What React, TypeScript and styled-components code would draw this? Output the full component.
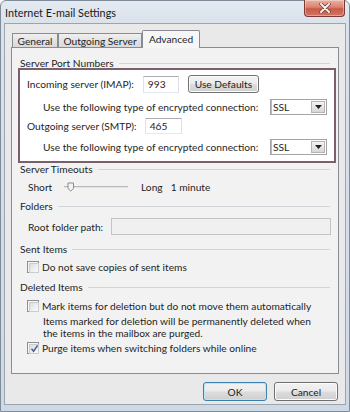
import React from "react";
import styled, { createGlobalStyle, css } from "styled-components";

const FONT = `Lato, "Open Sans", "Liberation Sans", sans-serif`;

const Global = createGlobalStyle`
  html, body { margin: 0; padding: 0; background: #ffffff; }
  body { font-family: ${FONT}; font-size: 10.2px; color: #1e1e1e; }
  * { box-sizing: border-box; }
`;

const Window = styled.div`
  position: relative;
  width: 350px;
  height: 412px;
  display: flex;
  flex-direction: column;
  padding: 0 3px 6px 3px;
  border: 1px solid #7f8b99;
  border-radius: 6px 6px 0 0;
  background: linear-gradient(180deg, #e4eaf1 0px, #dae2eb 22px, #cfd9e4 100%);
`;

const TitleBar = styled.div`
  height: 22px;
  display: flex;
  align-items: center;
  padding-left: 1px;
`;

const Title = styled.span`
  font-size: 10.8px;
  color: #1a1a1a;
  margin-top: 1px;
`;

const CloseButton = styled.div`
  margin-left: auto;
  margin-right: 1px;
  align-self: flex-start;
  margin-top: -1px;
  width: 41px;
  height: 17px;
  border: 1px solid #7a3a32;
  border-top: none;
  border-radius: 0 0 4px 4px;
  background: linear-gradient(180deg, #eab0a2 0%, #dc8270 45%, #c85a47 55%, #d07562 100%);
  box-shadow: inset 0 0 0 1px rgba(255, 255, 255, 0.35);
  display: flex;
  align-items: center;
  justify-content: center;
`;

const Client = styled.div`
  flex: 1;
  display: flex;
  flex-direction: column;
  background: #e9e9e9;
  border: 1px solid #9aa5b2;
  padding: 6px 6px 3px 6px;
`;

const TabBar = styled.div`
  position: relative;
  z-index: 1;
  display: flex;
  align-items: flex-end;
  height: 18px;
  margin-bottom: -1px;
  padding-left: 1px;
`;

const Tab = styled.div<{ $active?: boolean; $w: number }>`
  width: ${(p) => p.$w}px;
  border: 1px solid #898c95;
  border-bottom: none;
  display: flex;
  justify-content: center;
  ${(p) =>
    p.$active
      ? css`
          height: 18px;
          padding-top: 2px;
          background: #f6f6f6;
          border-radius: 2px 2px 0 0;
        `
      : css`
          height: 14px;
          margin-bottom: 1px;
          padding-top: 1px;
          background: linear-gradient(180deg, #f0f0f0 0%, #e3e3e3 50%, #d9d9d9 100%);
        `}
`;

const Panel = styled.div`
  height: 327px;
  flex: none;
  border: 1px solid #898c95;
  background: #f2f2f2;
  padding: 8px 8px 0 8px;
  display: flex;
  flex-direction: column;
`;

const GroupHeader = styled.div<{ $mt?: number }>`
  display: flex;
  align-items: center;
  height: 14px;
  line-height: 14px;
  margin-top: ${(p) => p.$mt ?? 0}px;
  color: #1e1e1e;
  &::after {
    content: "";
    flex: 1;
    height: 1px;
    margin-left: 5px;
    background: #d2d6da;
  }
`;

const HighlightBox = styled.div`
  margin: -2px -6px 0 -2px;
  border: 2px solid #7b5f6d;
  background: #ffffff;
  padding: 5px 7px 6px 7px;
  display: flex;
  flex-direction: column;
`;

const Row = styled.div<{ $mt?: number; $h?: number; $indent?: number }>`
  display: flex;
  align-items: center;
  height: ${(p) => p.$h ?? 16}px;
  margin-top: ${(p) => p.$mt ?? 0}px;
  padding-left: ${(p) => p.$indent ?? 0}px;
  white-space: nowrap;
`;

const TextBox = styled.div<{ $w?: number; $h?: number; $ml?: number; $disabled?: boolean; $grow?: boolean }>`
  ${(p) => (p.$grow ? "flex: 1;" : `width: ${p.$w}px;`)}
  height: ${(p) => p.$h ?? 16}px;
  margin-left: ${(p) => p.$ml ?? 8}px;
  border: 1px solid;
  display: flex;
  align-items: center;
  padding-left: 4px;
  ${(p) =>
    p.$disabled
      ? css`
          background: #f0f0f0;
          border-color: #c4c4c4;
          margin-right: -1px;
        `
      : css`
          background: #ffffff;
          border-color: #abadb3 #dbdfe6 #e3e9ef #e2e3ea;
        `}
`;

const PushButton = styled.div<{ $w: number; $h: number; $ml?: number; $default?: boolean }>`
  width: ${(p) => p.$w}px;
  height: ${(p) => p.$h}px;
  margin-left: ${(p) => p.$ml ?? 0}px;
  border: 1px solid ${(p) => (p.$default ? "#3c7fb1" : "#707070")};
  border-radius: 3px;
  background: linear-gradient(180deg, #f2f2f2 0%, #ebebeb 48%, #dddddd 52%, #cfcfcf 100%);
  box-shadow: inset 0 0 0 1px ${(p) => (p.$default ? "#bfe3f7" : "#fcfcfc")};
  display: flex;
  align-items: center;
  justify-content: center;
  color: #1e1e1e;
`;

const Select = styled.div`
  margin-left: auto;
  width: 57px;
  height: 16px;
  border: 1px solid #a3a3a3;
  background: #ffffff;
  display: flex;
  align-items: stretch;
`;

const SelectValue = styled.div`
  flex: 1;
  display: flex;
  align-items: center;
  padding-left: 2px;
  box-shadow: inset 1px 0 0 #9cc1e6;
`;

const DropButton = styled.div`
  width: 14px;
  margin: 1px;
  border: 1px solid #b5b5b5;
  background: linear-gradient(180deg, #f4f4f4 0%, #e6e6e6 50%, #d6d6d6 100%);
  display: flex;
  align-items: center;
  justify-content: center;
`;

const Short = styled.span`
  width: 36px;
`;

const Slider = styled.div`
  position: relative;
  width: 64px;
  height: 16px;
  display: flex;
  align-items: center;
`;

const Track = styled.div`
  width: 100%;
  height: 2px;
  border-top: 1px solid #b9b9b9;
  border-bottom: 1px solid #e4e4e4;
  background: #d8d8d8;
`;

const Thumb = styled.svg`
  position: absolute;
  left: 3px;
  top: 3px;
`;

const Spaced = styled.span<{ $ml: number }>`
  margin-left: ${(p) => p.$ml}px;
`;

const CheckBox = styled.div<{ $checked?: boolean }>`
  width: 12px;
  height: 12px;
  border: 1px solid #8f8f8f;
  background: #f7f7f7;
  padding: 1px;
  position: relative;
  &::before {
    content: "";
    display: block;
    width: 100%;
    height: 100%;
    border: 1px solid #c9cdd2;
    background: linear-gradient(135deg, #d9dce1 0%, #eef0f2 60%, #fbfbfb 100%);
  }
`;

const CheckMark = styled.svg`
  position: absolute;
  left: 1px;
  top: 0px;
`;

const CheckLabel = styled.span`
  margin-left: 3px;
`;

const Note = styled.div`
  margin-top: 2px;
  padding-left: 23px;
  line-height: 11.5px;
`;

const Footer = styled.div`
  display: flex;
  justify-content: flex-end;
  gap: 7px;
  margin-top: 8px;
  padding-right: 1px;
`;

const Check = ({ checked }: { checked?: boolean }) => (
  <CheckBox $checked={checked}>
    {checked && (
      <CheckMark width="11" height="11" viewBox="0 0 11 11">
        <path d="M2.5 5.8 L4.6 8.2 L8.6 2.4" fill="none" stroke="#4a5d8a" strokeWidth="1.5" />
      </CheckMark>
    )}
  </CheckBox>
);

const Combo = ({ value }: { value: string }) => (
  <Select>
    <SelectValue>{value}</SelectValue>
    <DropButton>
      <svg width="7" height="4" viewBox="0 0 7 4">
        <path d="M0 0 H7 L3.5 4 Z" fill="#222" />
      </svg>
    </DropButton>
  </Select>
);

export default function App() {
  return (
    <>
      <Global />
      <Window>
        <TitleBar>
          <Title>Internet E-mail Settings</Title>
          <CloseButton>
            <svg width="12" height="10" viewBox="0 0 12 10">
              <path d="M2 1 L10 9 M10 1 L2 9" stroke="#6a3a34" strokeWidth="3.4" strokeLinecap="round" />
              <path d="M2 1 L10 9 M10 1 L2 9" stroke="#f4f0ee" strokeWidth="2" strokeLinecap="round" />
            </svg>
          </CloseButton>
        </TitleBar>
        <Client>
          <TabBar>
            <Tab $w={46}>General</Tab>
            <Tab $w={84}>Outgoing Server</Tab>
            <Tab $w={58} $active>
              Advanced
            </Tab>
          </TabBar>
          <Panel>
            <GroupHeader>Server Port Numbers</GroupHeader>
            <HighlightBox>
              <Row $h={18}>
                <span>Incoming server (IMAP):</span>
                <TextBox $w={36} $h={17} $ml={9}>
                  993
                </TextBox>
                <PushButton $w={71} $h={18} $ml={9}>
                  Use Defaults
                </PushButton>
              </Row>
              <Row $mt={6} $indent={16}>
                <span>Use the following type of encrypted connection:</span>
                <Combo value="SSL" />
              </Row>
              <Row $mt={3}>
                <span>Outgoing server (SMTP):</span>
                <TextBox $w={37} $h={16} $ml={8}>
                  465
                </TextBox>
              </Row>
              <Row $mt={5} $indent={16}>
                <span>Use the following type of encrypted connection:</span>
                <Combo value="SSL" />
              </Row>
            </HighlightBox>

            <GroupHeader $mt={-1}>Server Timeouts</GroupHeader>
            <Row $mt={3} $indent={8}>
              <Short>Short</Short>
              <Slider>
                <Track />
                <Thumb width="8" height="10" viewBox="0 0 8 10">
                  <path d="M1 1 H6.5 V6.5 L3.8 9 L1 6.5 Z" fill="#f4f4f4" stroke="#8a8a8a" strokeWidth="1" />
                </Thumb>
              </Slider>
              <Spaced $ml={13}>Long</Spaced>
              <Spaced $ml={8}>1 minute</Spaced>
            </Row>

            <GroupHeader $mt={4}>Folders</GroupHeader>
            <Row $mt={5} $h={17} $indent={8}>
              <span>Root folder path:</span>
              <TextBox $grow $h={17} $ml={8} $disabled />
            </Row>

            <GroupHeader $mt={7}>Sent Items</GroupHeader>
            <Row $mt={3} $indent={7}>
              <Check />
              <CheckLabel>Do not save copies of sent items</CheckLabel>
            </Row>

            <GroupHeader $mt={5}>Deleted Items</GroupHeader>
            <Row $mt={4} $indent={7}>
              <Check />
              <CheckLabel>Mark items for deletion but do not move them automatically</CheckLabel>
            </Row>
            <Note>
              Items marked for deletion will be permanently deleted when
              <br />
              the items in the mailbox are purged.
            </Note>
            <Row $mt={1} $indent={7}>
              <Check checked />
              <CheckLabel>Purge items when switching folders while online</CheckLabel>
            </Row>
          </Panel>
          <Footer>
            <PushButton $w={64} $h={19} $default>
              OK
            </PushButton>
            <PushButton $w={64} $h={19}>
              Cancel
            </PushButton>
          </Footer>
        </Client>
      </Window>
    </>
  );
}
